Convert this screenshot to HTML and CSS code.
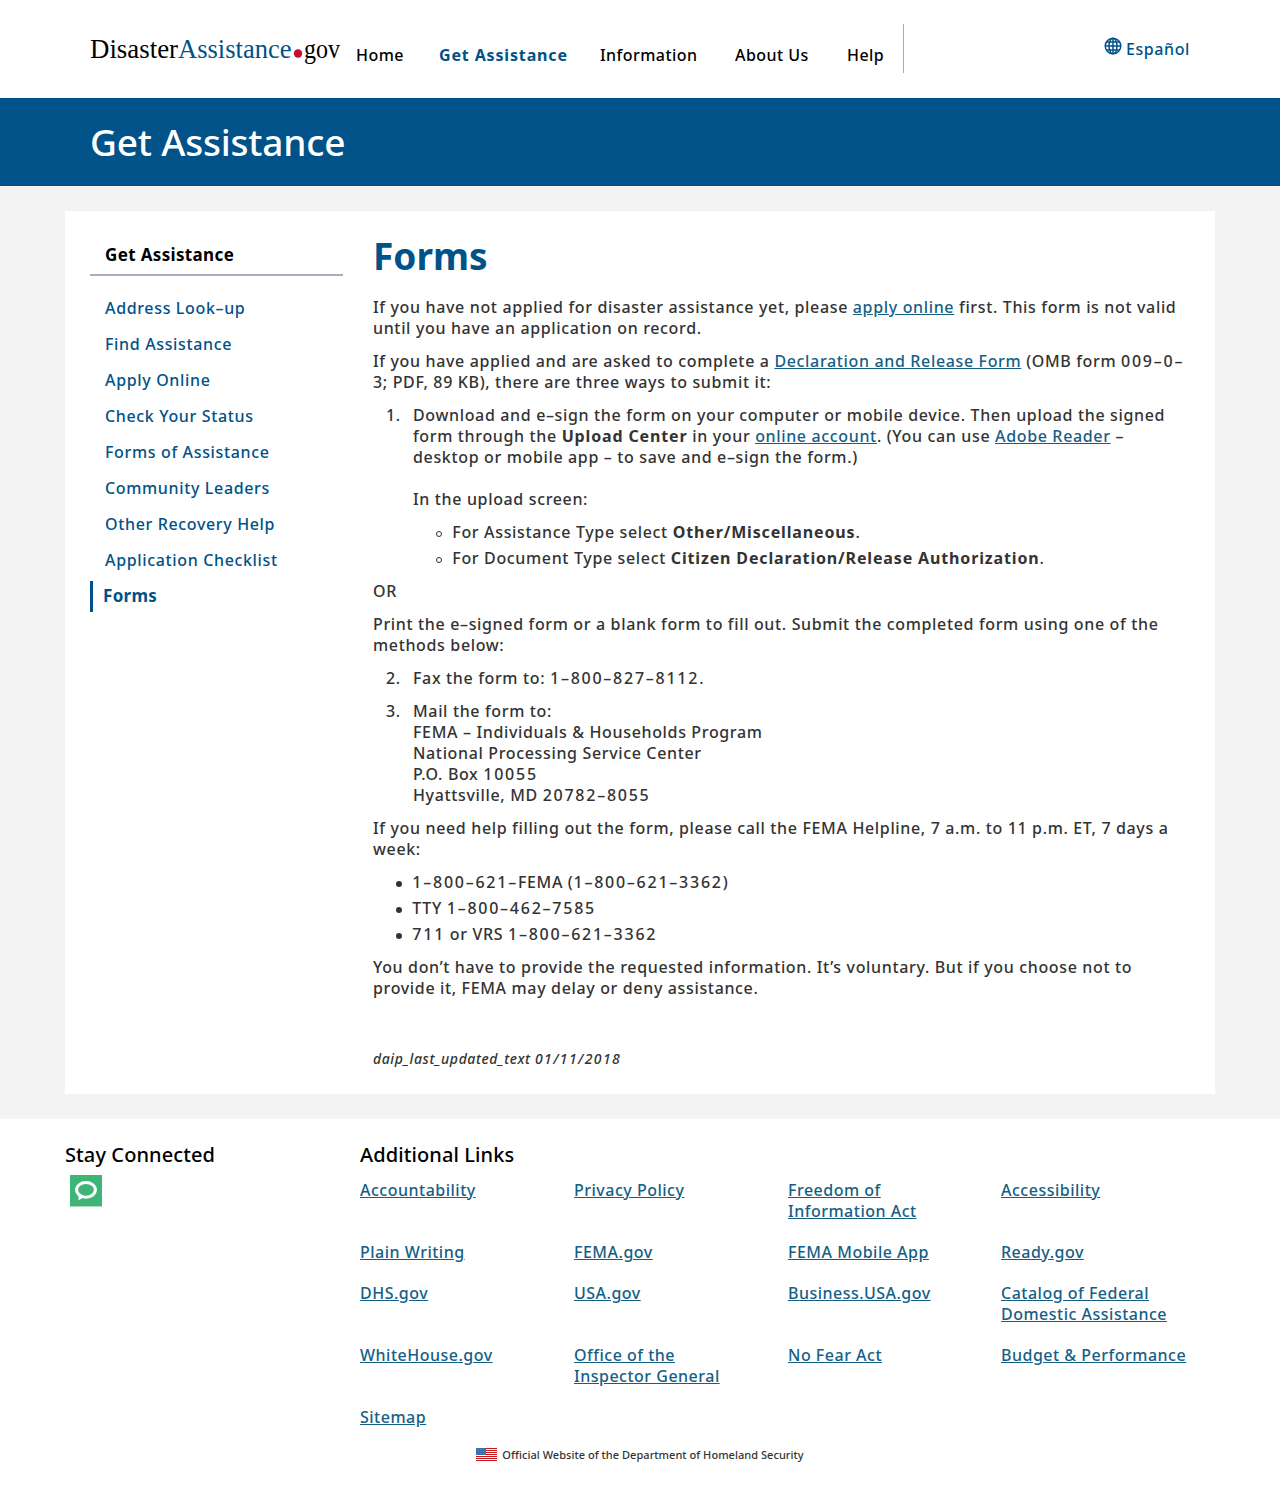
FILE: index.html
```html
<!DOCTYPE html>
<html lang="en">
<head>
<meta charset="utf-8">
<title>Forms | DisasterAssistance.gov</title>
<link rel="stylesheet" href="styles.css">
</head>
<body>
<header class="site-header">
  <a class="logo" href="#" aria-label="DisasterAssistance.gov"><svg width="260" height="44" viewBox="0 0 260 44"><text class="logo-text" x="0" y="28" textLength="88" lengthAdjust="spacingAndGlyphs">Disaster</text><text class="logo-text logo-blue" x="88" y="28" textLength="113.5" lengthAdjust="spacingAndGlyphs">Assistance</text><circle cx="208" cy="23.5" r="4.2" fill="#c8102e"/><text class="logo-text" x="214" y="28" textLength="36" lengthAdjust="spacingAndGlyphs">gov</text></svg></a>
  <nav class="main-nav">
    <a class="nav-home" href="#">Home</a>
    <a class="nav-get active" href="#">Get Assistance</a>
    <a class="nav-info" href="#">Information</a>
    <a class="nav-about" href="#">About Us</a>
    <a class="nav-help" href="#">Help</a>
  </nav>
  <a class="language" href="#"><svg width="18" height="18" viewBox="0 0 18 18" fill="none" stroke="#005288" stroke-width="1.5"><circle cx="9" cy="9" r="7.8"/><ellipse cx="9" cy="9" rx="4" ry="7.8"/><path d="M9 1v16M1 9h16M2.4 5h13.2M2.4 13h13.2"/></svg><span>Español</span></a>
</header>
<div class="banner"><span>Get Assistance</span></div>
<div class="page">
  <div class="card">
    <aside class="sidebar">
      <h2>Get Assistance</h2>
      <ul>
        <li><a href="#">Address Look–up</a></li>
        <li><a href="#">Find Assistance</a></li>
        <li><a href="#">Apply Online</a></li>
        <li><a href="#">Check Your Status</a></li>
        <li><a href="#">Forms of Assistance</a></li>
        <li><a href="#">Community Leaders</a></li>
        <li><a href="#">Other Recovery Help</a></li>
        <li><a href="#">Application Checklist</a></li>
        <li class="current"><a href="#">Forms</a></li>
      </ul>
    </aside>
    <main class="content">
      <h1>Forms</h1>
      <p>If you have not applied for disaster assistance yet, please <a href="#">apply online</a> first. This form is not valid<br>until you have an application on record.</p>
      <p>If you have applied and are asked to complete a <a href="#">Declaration and Release Form</a> (OMB form <span class="num">009–0–</span><br>3; PDF, 89 KB), there are three ways to submit it:</p>
      <ol>
        <li>Download and e–sign the form on your computer or mobile device. Then upload the signed<br>form through the <strong>Upload Center</strong> in your <a href="#">online account</a>. (You can use <a href="#">Adobe Reader</a> –<br>desktop or mobile app – to save and e–sign the form.)<br><br>In the upload screen:
          <ul>
            <li>For Assistance Type select <strong>Other/Miscellaneous</strong>.</li>
            <li>For Document Type select <strong>Citizen Declaration/Release Authorization</strong>.</li>
          </ul>
        </li>
      </ol>
      <p>OR</p>
      <p>Print the e–signed form or a blank form to fill out. Submit the completed form using one of the<br>methods below:</p>
      <ol class="continued" start="2">
        <li>Fax the form to: <span class="num">1–800–827–8112.</span></li>
        <li>Mail the form to:<br>FEMA – Individuals &amp; Households Program<br>National Processing Service Center<br>P.O. Box <span class="num">10055</span><br>Hyattsville, MD <span class="num">20782–8055</span></li>
      </ol>
      <p>If you need help filling out the form, please call the FEMA Helpline, 7 a.m. to 11 p.m. ET, 7 days a<br>week:</p>
      <ul class="phones">
        <li><span class="num">1–800–621–</span>FEMA (<span class="num">1–800–621–3362</span>)</li>
        <li>TTY <span class="num">1–800–462–7585</span></li>
        <li><span class="num">711</span> or VRS <span class="num">1–800–621–3362</span></li>
      </ul>
      <p>You don’t have to provide the requested information. It’s voluntary. But if you choose not to<br>provide it, FEMA may delay or deny assistance.</p>
      <p class="updated">daip_last_updated_text <span class="num">01/11/2018</span></p>
    </main>
  </div>
</div>
<footer class="site-footer">
  <div class="footer-columns">
    <section class="connected">
      <h3>Stay Connected</h3>
      <svg class="bubble" width="32" height="32" viewBox="0 0 32 32"><path fill="#3eb476" d="M0 0h32v31H0z"/><path fill="#a9dcc0" d="M0 31h32v1H0z"/><ellipse cx="16" cy="14.8" rx="9.4" ry="7.4" fill="none" stroke="#fff" stroke-width="3"/><path fill="#fff" d="M8.5 19V25.5l5-3.2z"/></svg>
    </section>
    <section class="links">
      <h3>Additional Links</h3>
      <div class="link-grid">
        <a href="#">Accountability</a><a href="#">Privacy Policy</a><a href="#">Freedom of<br>Information Act</a><a href="#">Accessibility</a>
        <a href="#">Plain Writing</a><a href="#">FEMA.gov</a><a href="#">FEMA Mobile App</a><a href="#">Ready.gov</a>
        <a href="#">DHS.gov</a><a href="#">USA.gov</a><a href="#">Business.USA.gov</a><a href="#">Catalog of Federal<br>Domestic Assistance</a>
        <a href="#">WhiteHouse.gov</a><a href="#">Office of the<br>Inspector General</a><a href="#">No Fear Act</a><a href="#">Budget &amp; Performance</a>
        <a href="#">Sitemap</a>
      </div>
    </section>
  </div>
  <div class="official"><svg width="21" height="13" viewBox="0 0 21 13"><path fill="#fff" d="M0 0h21v13H0z"/><path fill="#c4161c" d="M0 0h21v1H0zM0 2h21v1H0zM0 4h21v1H0zM0 6h21v1H0zM0 8h21v1H0zM0 10h21v1H0zM0 12h21v1H0z"/><path fill="#3a70aa" d="M0 0h10v7H0z"/><path fill="#5686b8" d="M1 1h1v1H1zM4 1h1v1H4zM7 1h1v1H7zM2 3h1v1H2zM5 3h1v1H5zM8 3h1v1H8zM1 5h1v1H1zM4 5h1v1H4zM7 5h1v1H7z"/></svg><span>Official Website of the Department of Homeland Security</span></div>
</footer>
</body>
</html>
```
FILE: styles.css
```css
*, *::before { box-sizing: border-box; }
body { margin: 0; font: 500 16px/21px "Noto Sans", "Open Sans", sans-serif; color: #333; background: #fff; white-space: nowrap; }
a { color: #005288; text-decoration: none; }
h1, h2, h3, p, ul, ol { margin: 0; padding: 0; }
.site-header { height: 98px; padding: 24px 90px 0; display: flex; align-items: flex-start; letter-spacing: .45px; }
.logo { width: 266px; padding-top: 6px; letter-spacing: 0; }
.logo svg { display: block; overflow: visible; }
.logo-text { font: 28px "Liberation Serif", serif; fill: #000; }
.logo-blue { fill: #005288; }
.main-nav { display: flex; width: 548px; height: 49px; border-right: 1px solid #aaa; padding-top: 21px; }
.main-nav a { color: #000; }
.main-nav a.active { color: #005288; font-weight: 700; letter-spacing: .85px; }
.nav-home { width: 83px; }
.nav-get { width: 161px; }
.nav-info { width: 135px; }
.nav-about { width: 112px; }
.language { margin-left: auto; display: flex; gap: 4px; padding-top: 14px; letter-spacing: .6px; }
.language svg { margin-top: -1px; }
.language span { padding-top: 1px; }
.banner { height: 88px; background: #005288; color: #fff; font-size: 37px; line-height: 87px; letter-spacing: -.2px; padding-left: 90px; }
.page { background: #f3f3f3; padding: 25px 65px; letter-spacing: .65px; }
.card { background: #fff; height: 883px; padding: 25px; display: flex; gap: 30px; }
.sidebar { flex: 0 0 253px; }
.sidebar h2 { font-size: 17px; line-height: 21px; letter-spacing: .35px; color: #000; padding: 8px 15px 9px; border-bottom: 2px solid #a9aebb; height: 40px; margin-bottom: 17px; }
.sidebar ul { list-style: none; }
.sidebar li { height: 31px; line-height: 31px; padding-left: 15px; margin-bottom: 5px; }
.sidebar .current { border-left: 3px solid #005288; padding-left: 10px; font-size: 17px; line-height: 29px; font-weight: 700; letter-spacing: .3px; }
.content h1 { font-size: 37px; line-height: 40px; letter-spacing: 0; color: #005288; margin-bottom: 21px; }
.content p, .content ol, .content ul { margin-bottom: 12px; }
.content strong { letter-spacing: .85px; }
.content .num { letter-spacing: 1.75px; }
.content ol, .content ul { padding-left: 40px; list-style: none; }
.content ol { counter-reset: step; }
.content ol.continued { counter-reset: step 1; }
.content ol > li { margin-bottom: 12px; counter-increment: step; }
.content ol > li::before { content: counter(step) "."; display: inline-block; width: 27px; margin-left: -27px; }
.content ul > li { margin-bottom: 5px; }
.content ul > li::before { content: ""; display: inline-block; width: 6px; height: 6px; margin: 0 10.35px 1px -17px; border-radius: 50%; background: #333; letter-spacing: 0; }
.content li > ul { margin-top: 12px; }
.content li > ul > li::before { background: none; border: 1px solid #333; }
.content a, .link-grid a { color: #155f86; text-decoration: underline; }
.content .updated { margin-top: 49px; font-size: 14px; font-style: italic; letter-spacing: .58px; }
.content .updated .num { letter-spacing: 1.4px; }
.site-footer { height: 383px; padding: 25px 65px 0; }
.footer-columns { display: flex; }
.connected { width: 295px; }
.site-footer h3 { font-size: 20px; line-height: 22px; letter-spacing: .1px; font-weight: 500; color: #000; }
.bubble { display: block; margin: 9px 0 0 5px; }
.link-grid { display: grid; grid-template-columns: 214px 214px 213px 190px; gap: 20px 0; margin-top: 14px; justify-items: start; letter-spacing: .5px; }
.official { display: flex; justify-content: center; align-items: center; gap: 5px; margin-top: 16px; font-size: 11px; letter-spacing: .04px; }
```
